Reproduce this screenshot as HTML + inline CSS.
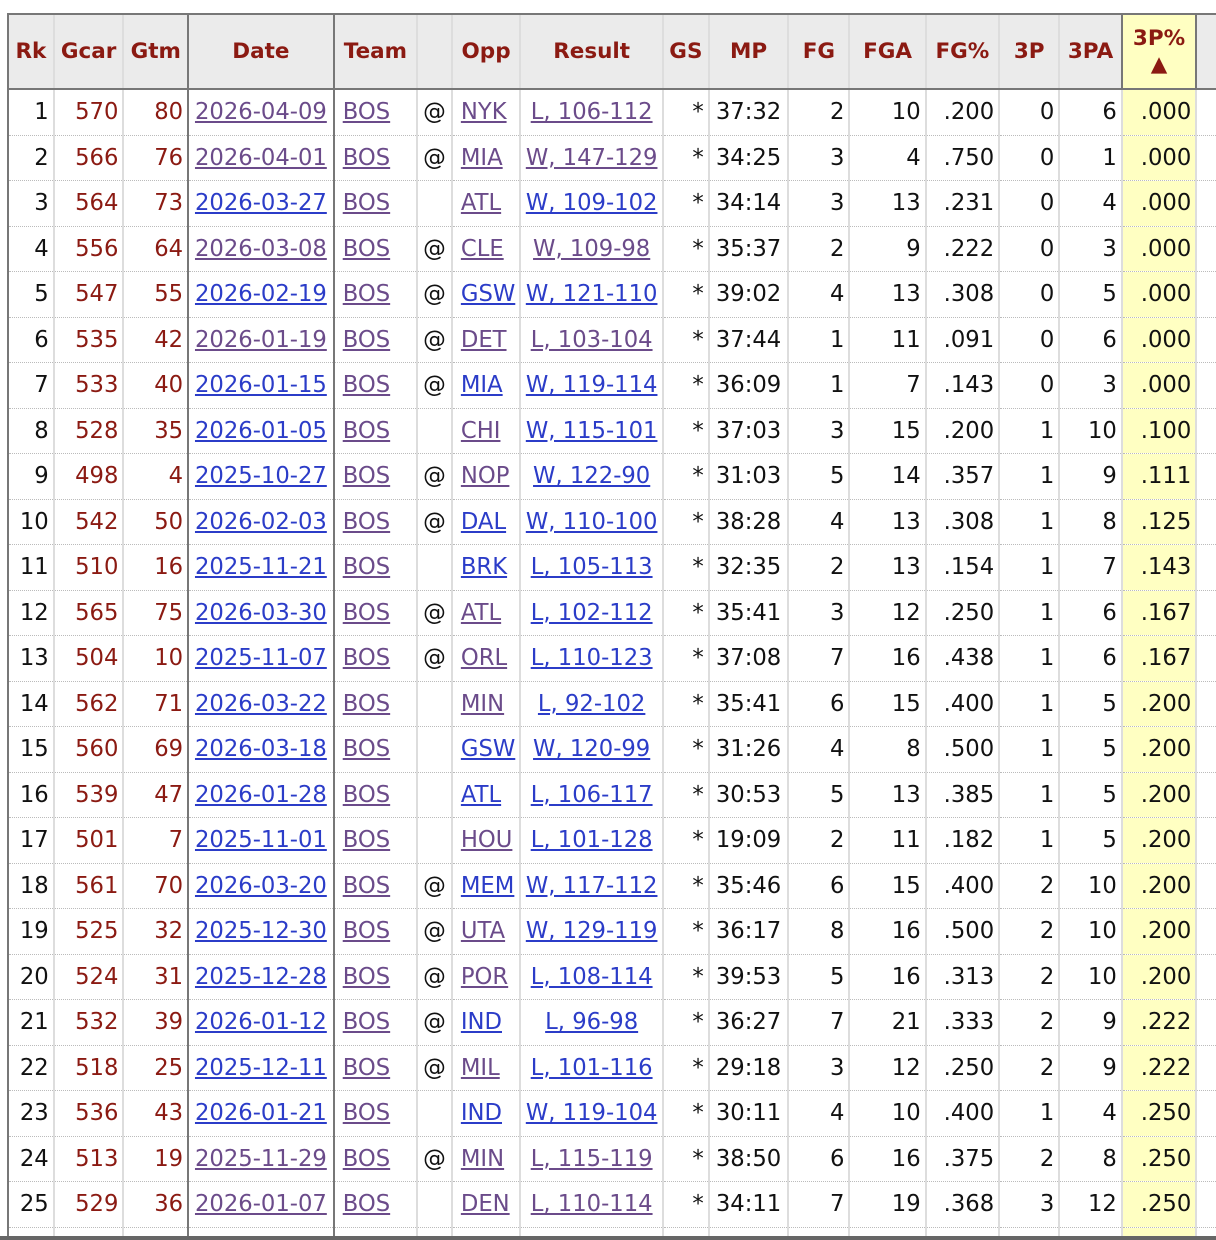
<!DOCTYPE html>
<html><head><meta charset="utf-8"><style>
html,body{margin:0;padding:0;background:#fff;width:1216px;height:1240px;overflow:hidden;position:relative}
table{position:absolute;left:7px;top:13px;border-collapse:collapse;table-layout:fixed;font-family:"DejaVu Sans","Liberation Sans",sans-serif;font-size:22.7px;color:#111}
th{background:#ebebeb;color:#8b1a12;font-weight:bold;font-size:21.5px;height:73px;border-top:2px solid #777;border-bottom:2px solid #777;border-left:2px solid #ddd;padding:0 2px;text-align:center;line-height:26px}
td{height:44.5px;line-height:26px;border-left:2px solid #ddd;border-bottom:1px dotted #bbb;padding:0 4px;text-align:right;white-space:nowrap;overflow:hidden}
.r{color:#8b1a12}
.l{text-align:left;padding-left:8px}.c{text-align:center;padding:0 1px}
.tk{border-left:2px solid #777}
.y{background:#ffffc2}
th.y{background:#ffffc2;border:2px solid #777}
a{text-decoration:underline}
.p{color:#6b4b8a}.b{color:#2b3cc8}
#bar{position:absolute;left:0;top:1236px;width:1216px;height:4px;background:#666}
</style></head><body>
<table>
<colgroup><col style="width:46px"><col style="width:70px"><col style="width:65px"><col style="width:146px"><col style="width:84px"><col style="width:35px"><col style="width:68px"><col style="width:143px"><col style="width:46px"><col style="width:80px"><col style="width:62px"><col style="width:77px"><col style="width:74px"><col style="width:61px"><col style="width:63px"><col style="width:75px"><col style="width:20px"></colgroup>
<tr><th style="border-left:2px solid #777">Rk</th><th>Gcar</th><th>Gtm</th><th class="tk">Date</th><th class="tk">Team</th><th></th><th>Opp</th><th>Result</th><th>GS</th><th>MP</th><th>FG</th><th>FGA</th><th>FG%</th><th>3P</th><th>3PA</th><th class="y">3P%<br>▲</th><th></th></tr>
<tr><td style="border-left:2px solid #777">1</td><td class="r">570</td><td class="r">80</td><td class="tk c"><a class="p">2026-04-09</a></td><td class="tk l"><a class="p">BOS</a></td><td class="c">@</td><td class="l"><a class="p">NYK</a></td><td class="c"><a class="p">L, 106-112</a></td><td>*</td><td class="c">37:32</td><td>2</td><td>10</td><td>.200</td><td>0</td><td>6</td><td class="y">.000</td><td></td></tr>
<tr><td style="border-left:2px solid #777">2</td><td class="r">566</td><td class="r">76</td><td class="tk c"><a class="p">2026-04-01</a></td><td class="tk l"><a class="p">BOS</a></td><td class="c">@</td><td class="l"><a class="p">MIA</a></td><td class="c"><a class="p">W, 147-129</a></td><td>*</td><td class="c">34:25</td><td>3</td><td>4</td><td>.750</td><td>0</td><td>1</td><td class="y">.000</td><td></td></tr>
<tr><td style="border-left:2px solid #777">3</td><td class="r">564</td><td class="r">73</td><td class="tk c"><a class="b">2026-03-27</a></td><td class="tk l"><a class="p">BOS</a></td><td class="c"></td><td class="l"><a class="p">ATL</a></td><td class="c"><a class="b">W, 109-102</a></td><td>*</td><td class="c">34:14</td><td>3</td><td>13</td><td>.231</td><td>0</td><td>4</td><td class="y">.000</td><td></td></tr>
<tr><td style="border-left:2px solid #777">4</td><td class="r">556</td><td class="r">64</td><td class="tk c"><a class="p">2026-03-08</a></td><td class="tk l"><a class="p">BOS</a></td><td class="c">@</td><td class="l"><a class="p">CLE</a></td><td class="c"><a class="p">W, 109-98</a></td><td>*</td><td class="c">35:37</td><td>2</td><td>9</td><td>.222</td><td>0</td><td>3</td><td class="y">.000</td><td></td></tr>
<tr><td style="border-left:2px solid #777">5</td><td class="r">547</td><td class="r">55</td><td class="tk c"><a class="b">2026-02-19</a></td><td class="tk l"><a class="p">BOS</a></td><td class="c">@</td><td class="l"><a class="b">GSW</a></td><td class="c"><a class="b">W, 121-110</a></td><td>*</td><td class="c">39:02</td><td>4</td><td>13</td><td>.308</td><td>0</td><td>5</td><td class="y">.000</td><td></td></tr>
<tr><td style="border-left:2px solid #777">6</td><td class="r">535</td><td class="r">42</td><td class="tk c"><a class="p">2026-01-19</a></td><td class="tk l"><a class="p">BOS</a></td><td class="c">@</td><td class="l"><a class="p">DET</a></td><td class="c"><a class="p">L, 103-104</a></td><td>*</td><td class="c">37:44</td><td>1</td><td>11</td><td>.091</td><td>0</td><td>6</td><td class="y">.000</td><td></td></tr>
<tr><td style="border-left:2px solid #777">7</td><td class="r">533</td><td class="r">40</td><td class="tk c"><a class="b">2026-01-15</a></td><td class="tk l"><a class="p">BOS</a></td><td class="c">@</td><td class="l"><a class="b">MIA</a></td><td class="c"><a class="b">W, 119-114</a></td><td>*</td><td class="c">36:09</td><td>1</td><td>7</td><td>.143</td><td>0</td><td>3</td><td class="y">.000</td><td></td></tr>
<tr><td style="border-left:2px solid #777">8</td><td class="r">528</td><td class="r">35</td><td class="tk c"><a class="b">2026-01-05</a></td><td class="tk l"><a class="p">BOS</a></td><td class="c"></td><td class="l"><a class="p">CHI</a></td><td class="c"><a class="b">W, 115-101</a></td><td>*</td><td class="c">37:03</td><td>3</td><td>15</td><td>.200</td><td>1</td><td>10</td><td class="y">.100</td><td></td></tr>
<tr><td style="border-left:2px solid #777">9</td><td class="r">498</td><td class="r">4</td><td class="tk c"><a class="b">2025-10-27</a></td><td class="tk l"><a class="p">BOS</a></td><td class="c">@</td><td class="l"><a class="p">NOP</a></td><td class="c"><a class="b">W, 122-90</a></td><td>*</td><td class="c">31:03</td><td>5</td><td>14</td><td>.357</td><td>1</td><td>9</td><td class="y">.111</td><td></td></tr>
<tr><td style="border-left:2px solid #777">10</td><td class="r">542</td><td class="r">50</td><td class="tk c"><a class="b">2026-02-03</a></td><td class="tk l"><a class="p">BOS</a></td><td class="c">@</td><td class="l"><a class="b">DAL</a></td><td class="c"><a class="b">W, 110-100</a></td><td>*</td><td class="c">38:28</td><td>4</td><td>13</td><td>.308</td><td>1</td><td>8</td><td class="y">.125</td><td></td></tr>
<tr><td style="border-left:2px solid #777">11</td><td class="r">510</td><td class="r">16</td><td class="tk c"><a class="b">2025-11-21</a></td><td class="tk l"><a class="p">BOS</a></td><td class="c"></td><td class="l"><a class="b">BRK</a></td><td class="c"><a class="b">L, 105-113</a></td><td>*</td><td class="c">32:35</td><td>2</td><td>13</td><td>.154</td><td>1</td><td>7</td><td class="y">.143</td><td></td></tr>
<tr><td style="border-left:2px solid #777">12</td><td class="r">565</td><td class="r">75</td><td class="tk c"><a class="b">2026-03-30</a></td><td class="tk l"><a class="p">BOS</a></td><td class="c">@</td><td class="l"><a class="p">ATL</a></td><td class="c"><a class="b">L, 102-112</a></td><td>*</td><td class="c">35:41</td><td>3</td><td>12</td><td>.250</td><td>1</td><td>6</td><td class="y">.167</td><td></td></tr>
<tr><td style="border-left:2px solid #777">13</td><td class="r">504</td><td class="r">10</td><td class="tk c"><a class="b">2025-11-07</a></td><td class="tk l"><a class="p">BOS</a></td><td class="c">@</td><td class="l"><a class="p">ORL</a></td><td class="c"><a class="b">L, 110-123</a></td><td>*</td><td class="c">37:08</td><td>7</td><td>16</td><td>.438</td><td>1</td><td>6</td><td class="y">.167</td><td></td></tr>
<tr><td style="border-left:2px solid #777">14</td><td class="r">562</td><td class="r">71</td><td class="tk c"><a class="b">2026-03-22</a></td><td class="tk l"><a class="p">BOS</a></td><td class="c"></td><td class="l"><a class="p">MIN</a></td><td class="c"><a class="b">L, 92-102</a></td><td>*</td><td class="c">35:41</td><td>6</td><td>15</td><td>.400</td><td>1</td><td>5</td><td class="y">.200</td><td></td></tr>
<tr><td style="border-left:2px solid #777">15</td><td class="r">560</td><td class="r">69</td><td class="tk c"><a class="b">2026-03-18</a></td><td class="tk l"><a class="p">BOS</a></td><td class="c"></td><td class="l"><a class="b">GSW</a></td><td class="c"><a class="b">W, 120-99</a></td><td>*</td><td class="c">31:26</td><td>4</td><td>8</td><td>.500</td><td>1</td><td>5</td><td class="y">.200</td><td></td></tr>
<tr><td style="border-left:2px solid #777">16</td><td class="r">539</td><td class="r">47</td><td class="tk c"><a class="b">2026-01-28</a></td><td class="tk l"><a class="p">BOS</a></td><td class="c"></td><td class="l"><a class="b">ATL</a></td><td class="c"><a class="b">L, 106-117</a></td><td>*</td><td class="c">30:53</td><td>5</td><td>13</td><td>.385</td><td>1</td><td>5</td><td class="y">.200</td><td></td></tr>
<tr><td style="border-left:2px solid #777">17</td><td class="r">501</td><td class="r">7</td><td class="tk c"><a class="b">2025-11-01</a></td><td class="tk l"><a class="p">BOS</a></td><td class="c"></td><td class="l"><a class="p">HOU</a></td><td class="c"><a class="b">L, 101-128</a></td><td>*</td><td class="c">19:09</td><td>2</td><td>11</td><td>.182</td><td>1</td><td>5</td><td class="y">.200</td><td></td></tr>
<tr><td style="border-left:2px solid #777">18</td><td class="r">561</td><td class="r">70</td><td class="tk c"><a class="b">2026-03-20</a></td><td class="tk l"><a class="p">BOS</a></td><td class="c">@</td><td class="l"><a class="b">MEM</a></td><td class="c"><a class="b">W, 117-112</a></td><td>*</td><td class="c">35:46</td><td>6</td><td>15</td><td>.400</td><td>2</td><td>10</td><td class="y">.200</td><td></td></tr>
<tr><td style="border-left:2px solid #777">19</td><td class="r">525</td><td class="r">32</td><td class="tk c"><a class="b">2025-12-30</a></td><td class="tk l"><a class="p">BOS</a></td><td class="c">@</td><td class="l"><a class="p">UTA</a></td><td class="c"><a class="b">W, 129-119</a></td><td>*</td><td class="c">36:17</td><td>8</td><td>16</td><td>.500</td><td>2</td><td>10</td><td class="y">.200</td><td></td></tr>
<tr><td style="border-left:2px solid #777">20</td><td class="r">524</td><td class="r">31</td><td class="tk c"><a class="b">2025-12-28</a></td><td class="tk l"><a class="p">BOS</a></td><td class="c">@</td><td class="l"><a class="p">POR</a></td><td class="c"><a class="b">L, 108-114</a></td><td>*</td><td class="c">39:53</td><td>5</td><td>16</td><td>.313</td><td>2</td><td>10</td><td class="y">.200</td><td></td></tr>
<tr><td style="border-left:2px solid #777">21</td><td class="r">532</td><td class="r">39</td><td class="tk c"><a class="b">2026-01-12</a></td><td class="tk l"><a class="p">BOS</a></td><td class="c">@</td><td class="l"><a class="b">IND</a></td><td class="c"><a class="b">L, 96-98</a></td><td>*</td><td class="c">36:27</td><td>7</td><td>21</td><td>.333</td><td>2</td><td>9</td><td class="y">.222</td><td></td></tr>
<tr><td style="border-left:2px solid #777">22</td><td class="r">518</td><td class="r">25</td><td class="tk c"><a class="b">2025-12-11</a></td><td class="tk l"><a class="p">BOS</a></td><td class="c">@</td><td class="l"><a class="p">MIL</a></td><td class="c"><a class="b">L, 101-116</a></td><td>*</td><td class="c">29:18</td><td>3</td><td>12</td><td>.250</td><td>2</td><td>9</td><td class="y">.222</td><td></td></tr>
<tr><td style="border-left:2px solid #777">23</td><td class="r">536</td><td class="r">43</td><td class="tk c"><a class="b">2026-01-21</a></td><td class="tk l"><a class="p">BOS</a></td><td class="c"></td><td class="l"><a class="b">IND</a></td><td class="c"><a class="b">W, 119-104</a></td><td>*</td><td class="c">30:11</td><td>4</td><td>10</td><td>.400</td><td>1</td><td>4</td><td class="y">.250</td><td></td></tr>
<tr><td style="border-left:2px solid #777">24</td><td class="r">513</td><td class="r">19</td><td class="tk c"><a class="p">2025-11-29</a></td><td class="tk l"><a class="p">BOS</a></td><td class="c">@</td><td class="l"><a class="p">MIN</a></td><td class="c"><a class="p">L, 115-119</a></td><td>*</td><td class="c">38:50</td><td>6</td><td>16</td><td>.375</td><td>2</td><td>8</td><td class="y">.250</td><td></td></tr>
<tr><td style="border-left:2px solid #777">25</td><td class="r">529</td><td class="r">36</td><td class="tk c"><a class="p">2026-01-07</a></td><td class="tk l"><a class="p">BOS</a></td><td class="c"></td><td class="l"><a class="p">DEN</a></td><td class="c"><a class="p">L, 110-114</a></td><td>*</td><td class="c">34:11</td><td>7</td><td>19</td><td>.368</td><td>3</td><td>12</td><td class="y">.250</td><td></td></tr>
<tr><td style="border-left:2px solid #777"></td><td></td><td></td><td class="tk"></td><td class="tk"></td><td></td><td></td><td></td><td></td><td></td><td></td><td></td><td></td><td></td><td></td><td class="y"></td><td></td></tr>
</table>
<div id="bar"></div>
</body></html>
